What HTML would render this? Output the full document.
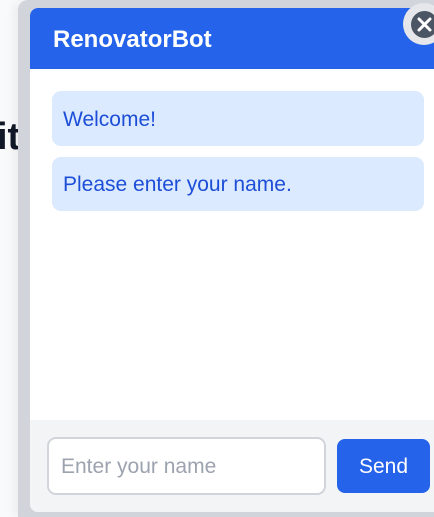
<!DOCTYPE html>
<html><head><style>
html,body{margin:0;padding:0;width:434px;height:517px;overflow:hidden;background:#f9fafb;font-family:"Liberation Sans",sans-serif;position:relative}
.it{position:absolute;left:-3px;top:116px;font-size:38px;font-weight:bold;color:#111827}
.overlay{position:absolute;left:18px;top:0;width:440px;height:517px;background:#d1d5db;border-top-left-radius:10px;box-shadow:-4px 0 10px rgba(0,0,0,0.06)}
.box{position:absolute;left:30px;top:8px;width:420px;height:504px;background:#fff;border-radius:8px;overflow:hidden}
.hd{height:61px;background:#2563eb;color:#fff;font-weight:bold;font-size:24px;line-height:63px;padding-left:23px}
.b{position:absolute;left:22px;width:372px;background:#dbeafe;border-radius:9px;color:#1d4ed8;font-size:21px;padding-left:11px;box-sizing:border-box}
.ft{position:absolute;left:0;top:412px;width:420px;height:92px;background:#f3f4f6}
.in{position:absolute;left:17px;top:17px;width:279px;height:58px;box-sizing:border-box;border:2px solid #d1d5db;border-radius:9px;background:#fff;color:#9ca3af;font-size:21px;line-height:56px;padding-left:12px}
.send{position:absolute;left:307px;top:19px;width:93px;height:54px;background:#2563eb;border-radius:8px;color:#fff;font-size:21px;line-height:56px;text-align:center}
.close{position:absolute;left:403px;top:3px;width:42px;height:42px;border-radius:50%;background:#e5e7eb}
.close .c{position:absolute;left:8px;top:8px;width:27px;height:27px;border-radius:50%;background:#4b5563}
</style></head><body>
<div class="it">it</div>
<div class="overlay"></div>
<div class="box">
<div class="hd">RenovatorBot</div>
<div class="b" style="top:83px;height:55px;line-height:57px">Welcome!</div>
<div class="b" style="top:149px;height:54px;line-height:56px">Please enter your name.</div>
<div class="ft"><div class="in">Enter your name</div><div class="send">Send</div></div>
</div>
<div class="close"><div class="c"><svg width="27" height="27" viewBox="0 0 27 27"><path d="M8 8L19 19M19 8L8 19" stroke="#fff" stroke-width="3" stroke-linecap="round"/></svg></div></div>
</body></html>
